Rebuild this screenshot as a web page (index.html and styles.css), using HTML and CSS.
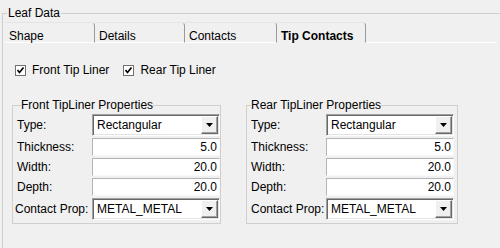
FILE: index.html
```html
<!DOCTYPE html>
<html>
<head>
    <title>Leaf Data</title>
    <link rel="stylesheet" href="styles.css">
</head>
<body>
    <fieldset class="leaf">
        <legend class="leaf-title">Leaf Data</legend>
        <div class="tabs">
            <div class="tab tab-shape">Shape</div>
            <div class="tab tab-details">Details</div>
            <div class="tab tab-contacts">Contacts</div>
            <div class="tab tab-active">Tip Contacts</div>
            <div class="tab-fill"></div>
        </div>
        <div class="panel">
            <div class="checks">
                <label class="check">
                    <span class="box"><svg width="9" height="9" viewBox="0 0 9 9"><path d="M1.5 4 L3.5 6.5 L7.5 1.5" fill="none" stroke="#000" stroke-width="1.7"/></svg></span>
                    Front Tip Liner
                </label>
                <label class="check">
                    <span class="box"><svg width="9" height="9" viewBox="0 0 9 9"><path d="M1.5 4 L3.5 6.5 L7.5 1.5" fill="none" stroke="#000" stroke-width="1.7"/></svg></span>
                    Rear Tip Liner
                </label>
            </div>
            <div class="groups">
                <fieldset class="group group-front">
                    <legend class="group-title">Front TipLiner Properties</legend>
                    <div class="form">
                        <span class="lbl lbl-tall">Type:</span>
                        <div class="combo"><span class="combo-text">Rectangular</span><span class="drop"><svg width="7" height="4" viewBox="0 0 7 4"><path d="M0 0 H7 L3.5 4 Z" fill="#000"/></svg></span></div>
                        <span class="lbl">Thickness:</span>
                        <div class="field">5.0</div>
                        <span class="lbl">Width:</span>
                        <div class="field">20.0</div>
                        <span class="lbl">Depth:</span>
                        <div class="field">20.0</div>
                        <span class="lbl lbl-tall lbl-tight">Contact Prop:</span>
                        <div class="combo"><span class="combo-text">METAL_METAL</span><span class="drop"><svg width="7" height="4" viewBox="0 0 7 4"><path d="M0 0 H7 L3.5 4 Z" fill="#000"/></svg></span></div>
                    </div>
                </fieldset>
                <fieldset class="group group-rear">
                    <legend class="group-title">Rear TipLiner Properties</legend>
                    <div class="form">
                        <span class="lbl lbl-tall">Type:</span>
                        <div class="combo"><span class="combo-text">Rectangular</span><span class="drop"><svg width="7" height="4" viewBox="0 0 7 4"><path d="M0 0 H7 L3.5 4 Z" fill="#000"/></svg></span></div>
                        <span class="lbl">Thickness:</span>
                        <div class="field">5.0</div>
                        <span class="lbl">Width:</span>
                        <div class="field">20.0</div>
                        <span class="lbl">Depth:</span>
                        <div class="field">20.0</div>
                        <span class="lbl lbl-tall">Contact Prop:</span>
                        <div class="combo"><span class="combo-text">METAL_METAL</span><span class="drop"><svg width="7" height="4" viewBox="0 0 7 4"><path d="M0 0 H7 L3.5 4 Z" fill="#000"/></svg></span></div>
                    </div>
                </fieldset>
            </div>
        </div>
    </fieldset>
</body>
</html>
```

FILE: styles.css
```css
body {
    margin: 0;
    background-color: #f0f0f0;
    color: #000;
    font-family: "Liberation Sans", Arial, sans-serif;
    font-size: 12px;
    line-height: 14px;
    overflow: hidden;
}

.leaf {
    margin: 6px 0 0 2px;
    padding: 0;
    width: 520px;
    height: 242px;
    border: 1px solid #cfcfcf;
    border-bottom: none;
    box-sizing: border-box;
}

.leaf-title {
    margin-left: 4px;
    padding: 0 1px;
}

.tabs {
    display: flex;
    margin: 2px 0 0 2px;
    height: 21px;
}

.tab {
    padding: 6px 0 0 4px;
    border-top: 1px solid #e4e4e4;
    border-right: 1px solid #9a9a9a;
    border-bottom: 1px solid #fff;
    border-top-right-radius: 4px;
    box-sizing: border-box;
}

.tab-shape {
    width: 90px;
}

.tab-details {
    width: 90px;
}

.tab-contacts {
    width: 92px;
}

.tab-active {
    width: 89px;
    font-weight: bold;
    border-bottom-color: transparent;
}

.tab-fill {
    width: 131px;
    border-bottom: 1px solid #fff;
}

.panel {
    padding: 20px 0 0 12px;
}

.checks {
    display: flex;
    gap: 14px;
    height: 14px;
}

.check {
    display: flex;
    align-items: center;
    gap: 6px;
}

.box {
    display: flex;
    align-items: center;
    justify-content: center;
    width: 11px;
    height: 11px;
    box-sizing: border-box;
    background-color: #fff;
    border: 1px solid #707070;
}

.groups {
    display: flex;
    align-items: flex-start;
    gap: 25px;
    margin: 21px 0 0 -3px;
}

.group {
    margin: 0;
    padding: 2px 0 3px 2px;
    border: 1px solid #cfcfcf;
    box-sizing: border-box;
}

.group-front {
    width: 209px;
}

.group-rear {
    width: 212px;
    padding-right: 2px;
}

.group-title {
    padding: 0;
}

.group-front .group-title {
    margin-left: 6px;
}

.group-rear .group-title {
    margin-left: 2px;
}

.form {
    display: grid;
    grid-template-columns: 77px 128px;
    grid-template-rows: 22px 18px 18px 18px 22px;
    row-gap: 2px;
}

.lbl {
    display: flex;
    align-items: center;
    padding-left: 2px;
}

.lbl-tight {
    padding-left: 0;
}

.combo {
    display: flex;
    align-items: center;
    justify-content: space-between;
    background-color: #fff;
    border: 1px solid;
    border-color: #a0a0a0 #fff #fff #a0a0a0;
    box-shadow: inset 1px 1px #696969, inset -1px -1px #e3e3e3;
    padding: 1px;
}

.combo-text {
    padding-left: 3px;
}

.drop {
    display: flex;
    align-items: center;
    justify-content: center;
    width: 17px;
    height: 18px;
    box-sizing: border-box;
    background-color: #f0f0f0;
    border: 1px solid;
    border-color: #fff #696969 #696969 #fff;
    box-shadow: inset -1px -1px #a0a0a0;
}

.field {
    display: flex;
    align-items: center;
    justify-content: flex-end;
    padding-right: 2px;
    background-color: #fff;
    border: 1px solid;
    border-color: #b4b4b4 #f8f8f8 #f8f8f8 #b4b4b4;
}
```
